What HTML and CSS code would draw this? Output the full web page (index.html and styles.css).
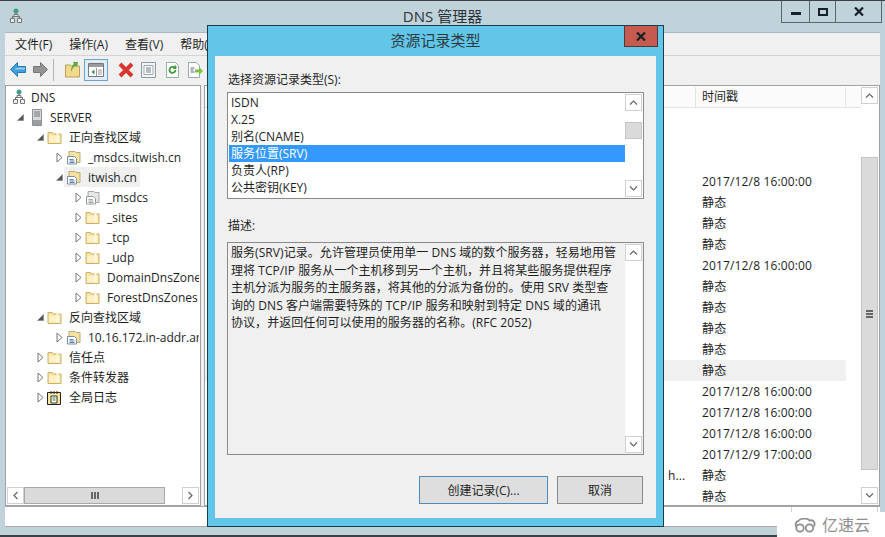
FILE: index.html
```html
<!DOCTYPE html>
<html lang="zh-CN">

<head>
	<meta charset="utf-8">
	<title>DNS 管理器</title>
	<link rel="stylesheet" href="styles.css">
</head>

<body>
	<svg class="defs" width="0" height="0">
		<defs>
			<symbol id="folder" viewBox="0 0 15 15">
				<path d="M1 2.500h4.500l1 1.500h7.500v9.500h-13z" fill="#f8e3a0" stroke="#cdb06a" />
				<path d="M2 5.500h11v7h-11z" fill="#fcf0c4" />
				<path d="M10.500 2v11" stroke="#fff8dc" stroke-width="2" />
			</symbol>
			<symbol id="zone" viewBox="0 0 15 15">
				<path d="M3 1.500h6l1 1h4v10h-11z" fill="#f6e2a0" stroke="#b9a878" />
				<path d="M1.500 6.500h7l2 2v5.500h-9z" fill="#fff" stroke="#7d8ea0" />
				<path d="M3.500 9.500h4M3.500 11h5M3.500 12.500h5" stroke="#5a84ad" />
			</symbol>
			<symbol id="zonegray" viewBox="0 0 15 15">
				<path d="M3 1.500h6l1 1h4v10h-11z" fill="#e6e6e6" stroke="#a8a8a8" />
				<path d="M1.500 6.500h7l2 2v5.500h-9z" fill="#fff" stroke="#9a9a9a" />
				<path d="M3.500 9.500h4M3.500 11h5M3.500 12.500h5" stroke="#9aa4ae" />
			</symbol>
			<symbol id="dnsnode" viewBox="0 0 12 16">
				<circle cx="6" cy="3" r="2.500" fill="#3f9d8c" />
				<path d="M6 5v4M2.500 10V8.500h7V10" stroke="#666" fill="none" />
				<path d="M4 6.500h4v2h-4zM.5 10.500h4v4h-4zM7.500 10.500h4v4h-4z" fill="#eee" stroke="#777" />
			</symbol>
			<symbol id="closed" viewBox="0 0 7 11">
				<path d="M1 1l5 4.500-5 4.500z" fill="#fff" stroke="#777" />
			</symbol>
			<symbol id="open" viewBox="0 0 7 11">
				<path d="M6.500 2.500v6h-6z" fill="#555" stroke="#777" stroke-width=".5" />
			</symbol>
			<symbol id="up" viewBox="0 0 9 5">
				<path d="M1 4.500l3.500-3.500 3.500 3.500" fill="none" stroke="#666" stroke-width="1.200" />
			</symbol>
			<symbol id="down" viewBox="0 0 9 5">
				<path d="M1 .5l3.500 3.500 3.500-3.500" fill="none" stroke="#666" stroke-width="1.200" />
			</symbol>
		</defs>
	</svg>

	<div class="desktop">
		<div class="window">
			<div class="titlebar">
				<svg class="app-icon" width="12" height="16"><use href="#dnsnode" /></svg>
				<div class="window-title">DNS 管理器</div>
				<div class="caption-buttons">
					<div class="cap cap-min"><span></span></div>
					<div class="cap cap-max"><span></span></div>
					<div class="cap cap-close">
						<svg width="10" height="9" viewBox="0 0 10 9"><path d="M1 .5l8 8M9 .5l-8 8" stroke="#16202a" stroke-width="2.200" /></svg>
					</div>
				</div>
			</div>

			<div class="frame">
				<div class="menubar">
					<span>文件(F)</span>
					<span>操作(A)</span>
					<span>查看(V)</span>
					<span>帮助(H)</span>
				</div>

				<div class="toolbar">
					<svg width="16" height="15" viewBox="0 0 16 15"><path d="M.5 7.500l7-7v4h8v6h-8v4z" fill="#3d9fdc" stroke="#2a78b4" /><path d="M8 5.500h7v2h-11z" fill="#8fd0f2" /></svg>
					<svg class="tool-next" width="15" height="15" viewBox="0 0 15 15"><path d="M14.500 7.500l-7-7v4h-7v6h7v4z" fill="#949494" stroke="#777" /></svg>
					<div class="tool-sep"></div>
					<svg width="15" height="17" viewBox="0 0 15 17"><path d="M.5 4h5l1 1h8v11h-14z" fill="#f3d98c" stroke="#b99f5c" /><path d="M6 11c0-4 1-7 3-8l-1-2h5l-1 5-1.500-1.500c-2 1-3 3-4.500 6.500z" fill="#5aa83c" /></svg>
					<div class="tool-active">
						<svg width="16" height="14" viewBox="0 0 16 14"><path d="M.5.5h15v13h-15z" fill="#fff" stroke="#777" /><path d="M1 1h14v3h-14z" fill="#9a9a9a" /><path d="M8.500 5v8" stroke="#999" /><path d="M6.500 6.500l-3 2.500 3 2.500z" fill="#3e8e5a" /><path d="M10 7h4M10 9h4M10 11h4" stroke="#999" /></svg>
					</div>
					<svg class="tool-del" width="16" height="16" viewBox="0 0 16 16"><path d="M2 2l12 12M14 2l-12 12" stroke="#d8362c" stroke-width="4" /></svg>
					<svg class="tool-props" width="15" height="16" viewBox="0 0 15 16"><path d="M.5.500h14v15h-14z" fill="#f4f4f4" stroke="#8a9aa6" /><path d="M3 3.500h9v9h-9z" fill="#fff" stroke="#9aa" /><path d="M5 6h5M5 8h5M5 10h5" stroke="#778" /></svg>
					<svg class="tool-refresh" width="13" height="16" viewBox="0 0 13 16"><path d="M.5.500h9l3 3v12h-12z" fill="#fff" stroke="#9aa" /><path d="M9.500 8a3 3 0 1 1-1-2.300M9.500 3.500v2.500h-2.500" fill="none" stroke="#3f9a3a" stroke-width="1.800" /></svg>
					<svg class="tool-export" width="15" height="16" viewBox="0 0 15 16"><path d="M.5.500h8l3 3v12h-11z" fill="#fff" stroke="#9aa" /><path d="M2.500 6h4M2.500 8h3M2.500 10h4" stroke="#668" /><path d="M7 7.500h4v-2.500l4 4-4 4v-2.500h-4z" fill="#7cc142" /></svg>
				</div>

				<div class="panes">
					<div class="tree-pane">
						<div class="tree">
							<div class="node">
								<svg class="node-icon-dns" width="12" height="16"><use href="#dnsnode" /></svg>
								<span>DNS</span>
							</div>
							<div class="node lvl-1">
								<svg class="exp" width="7" height="11"><use href="#open" /></svg>
								<svg class="server" width="10" height="17" viewBox="0 0 10 17"><path d="M.5.500h9v16h-9z" fill="#d6dadc" stroke="#8f8f8f" /><path d="M2 3h6M2 5h6M2 7h6" stroke="#777" /><path d="M1 11h8v5h-8z" fill="#98a0a4" /></svg>
								<span>SERVER</span>
							</div>
							<div class="node lvl-2">
								<svg class="exp" width="7" height="11"><use href="#open" /></svg>
								<svg class="ico" width="15" height="15"><use href="#folder" /></svg>
								<span>正向查找区域</span>
							</div>
							<div class="node lvl-3">
								<svg class="exp" width="7" height="11"><use href="#closed" /></svg>
								<svg class="ico" width="15" height="15"><use href="#zone" /></svg>
								<span>_msdcs.itwish.cn</span>
							</div>
							<div class="node lvl-3">
								<svg class="exp" width="7" height="11"><use href="#open" /></svg>
								<div class="node-current">
									<svg class="ico" width="15" height="15"><use href="#zone" /></svg>
									<span>itwish.cn</span>
								</div>
							</div>
							<div class="node lvl-4">
								<svg class="exp" width="7" height="11"><use href="#closed" /></svg>
								<svg class="ico" width="15" height="15"><use href="#zonegray" /></svg>
								<span>_msdcs</span>
							</div>
							<div class="node lvl-4">
								<svg class="exp" width="7" height="11"><use href="#closed" /></svg>
								<svg class="ico" width="15" height="15"><use href="#folder" /></svg>
								<span>_sites</span>
							</div>
							<div class="node lvl-4">
								<svg class="exp" width="7" height="11"><use href="#closed" /></svg>
								<svg class="ico" width="15" height="15"><use href="#folder" /></svg>
								<span>_tcp</span>
							</div>
							<div class="node lvl-4">
								<svg class="exp" width="7" height="11"><use href="#closed" /></svg>
								<svg class="ico" width="15" height="15"><use href="#folder" /></svg>
								<span>_udp</span>
							</div>
							<div class="node lvl-4">
								<svg class="exp" width="7" height="11"><use href="#closed" /></svg>
								<svg class="ico" width="15" height="15"><use href="#folder" /></svg>
								<span>DomainDnsZones</span>
							</div>
							<div class="node lvl-4">
								<svg class="exp" width="7" height="11"><use href="#closed" /></svg>
								<svg class="ico" width="15" height="15"><use href="#folder" /></svg>
								<span>ForestDnsZones</span>
							</div>
							<div class="node lvl-2">
								<svg class="exp" width="7" height="11"><use href="#open" /></svg>
								<svg class="ico" width="15" height="15"><use href="#folder" /></svg>
								<span>反向查找区域</span>
							</div>
							<div class="node lvl-3">
								<svg class="exp" width="7" height="11"><use href="#closed" /></svg>
								<svg class="ico" width="15" height="15"><use href="#zone" /></svg>
								<span>10.16.172.in-addr.arpa</span>
							</div>
							<div class="node lvl-2">
								<svg class="exp" width="7" height="11"><use href="#closed" /></svg>
								<svg class="ico" width="15" height="15"><use href="#folder" /></svg>
								<span>信任点</span>
							</div>
							<div class="node lvl-2">
								<svg class="exp" width="7" height="11"><use href="#closed" /></svg>
								<svg class="ico" width="15" height="15"><use href="#folder" /></svg>
								<span>条件转发器</span>
							</div>
							<div class="node lvl-2">
								<svg class="exp" width="7" height="11"><use href="#closed" /></svg>
								<svg class="ico" width="15" height="15" viewBox="0 0 15 15"><path d="M.5 2.500h13v12h-13z" fill="#f6e6a0" stroke="#222" /><path d="M4 1v3M7 1v3M10 1v3" stroke="#333" /><path d="M4 6h6v7h-6z" fill="#fff" stroke="#333" /><path d="M5.500 8h3M5.500 10h3" stroke="#3a7d3a" /></svg>
								<span>全局日志</span>
							</div>
						</div>
						<div class="hscroll">
							<div class="sb-btn">
								<svg width="5" height="9" viewBox="0 0 5 9"><path d="M4.500 1l-3.500 3.500 3.500 3.500" fill="none" stroke="#666" stroke-width="1.200" /></svg>
							</div>
							<div class="hthumb"><i></i><i></i><i></i></div>
							<div class="sb-track"></div>
							<div class="sb-btn">
								<svg width="5" height="9" viewBox="0 0 5 9"><path d="M.5 1l3.500 3.500-3.500 3.500" fill="none" stroke="#666" stroke-width="1.200" /></svg>
							</div>
						</div>
					</div>

					<div class="list-pane">
						<div class="list-main">
							<div class="list-head">
								<div class="head-cell head-blank"></div>
								<div class="head-cell head-time">时间戳</div>
							</div>
							<div class="list-rows">
								<div class="row"><span class="col-a"></span>2017/12/8 16:00:00</div>
								<div class="row"><span class="col-a"></span>静态</div>
								<div class="row"><span class="col-a"></span>静态</div>
								<div class="row"><span class="col-a"></span>静态</div>
								<div class="row"><span class="col-a"></span>2017/12/8 16:00:00</div>
								<div class="row"><span class="col-a"></span>静态</div>
								<div class="row"><span class="col-a"></span>静态</div>
								<div class="row"><span class="col-a"></span>静态</div>
								<div class="row"><span class="col-a"></span>静态</div>
								<div class="row row-selected"><span class="col-a"></span>静态</div>
								<div class="row"><span class="col-a"></span>2017/12/8 16:00:00</div>
								<div class="row"><span class="col-a"></span>2017/12/8 16:00:00</div>
								<div class="row"><span class="col-a"></span>2017/12/8 16:00:00</div>
								<div class="row"><span class="col-a"></span>2017/12/9 17:00:00</div>
								<div class="row"><span class="col-a">h...</span>静态</div>
								<div class="row"><span class="col-a"></span>静态</div>
							</div>
						</div>
						<div class="vscroll vscroll-list">
							<div class="sb-btn"><svg width="9" height="5"><use href="#up" /></svg></div>
							<div class="sb-track list-track-a"></div>
							<div class="vthumb list-thumb"><i></i><i></i><i></i></div>
							<div class="sb-track list-track-b"></div>
							<div class="sb-btn"><svg width="9" height="5"><use href="#down" /></svg></div>
						</div>
					</div>
				</div>

				<div class="statusbar">
					<div class="status-cell"></div>
					<div class="status-end"></div>
				</div>
			</div>
		</div>

		<!-- dialog sits over the window -->
		<div class="dialog">
			<div class="dialog-title">
				资源记录类型
				<div class="dialog-close">
					<svg width="12" height="9" viewBox="0 0 12 9"><path d="M2 .5l8 8M10 .5l-8 8" stroke="#16202a" stroke-width="2.200" /></svg>
				</div>
			</div>
			<div class="dialog-body">
				<div class="field-label">选择资源记录类型(S):</div>
				<div class="type-box">
					<div class="type-list">
						<div class="type-item">ISDN</div>
						<div class="type-item">X.25</div>
						<div class="type-item">别名(CNAME)</div>
						<div class="type-item type-selected">服务位置(SRV)</div>
						<div class="type-item">负责人(RP)</div>
						<div class="type-item">公共密钥(KEY)</div>
					</div>
					<div class="vscroll">
						<div class="sb-btn"><svg width="9" height="5"><use href="#up" /></svg></div>
						<div class="sb-track type-track-a"></div>
						<div class="vthumb type-thumb"></div>
						<div class="sb-track type-track-b"></div>
						<div class="sb-btn"><svg width="9" height="5"><use href="#down" /></svg></div>
					</div>
				</div>

				<div class="field-label desc-label">描述:</div>
				<div class="desc-box">
					<div class="desc-text">
						<div>服务(SRV)记录。允许管理员使用单一 DNS 域的数个服务器，轻易地用管</div>
						<div>理将 TCP/IP 服务从一个主机移到另一个主机，并且将某些服务提供程序</div>
						<div>主机分派为服务的主服务器，将其他的分派为备份的。使用 SRV 类型查</div>
						<div>询的 DNS 客户端需要特殊的 TCP/IP 服务和映射到特定 DNS 域的通讯</div>
						<div>协议，并返回任何可以使用的服务器的名称。(RFC 2052)</div>
					</div>
					<div class="vscroll vscroll-desc">
						<div class="sb-btn"><svg width="9" height="5"><use href="#up" /></svg></div>
						<div class="sb-track desc-track"></div>
						<div class="sb-btn"><svg width="9" height="5"><use href="#down" /></svg></div>
					</div>
				</div>

				<div class="dialog-buttons">
					<button class="btn btn-default">创建记录(C)...</button>
					<button class="btn">取消</button>
				</div>
			</div>
		</div>

		<!-- site watermark in the corner -->
		<div class="watermark">
			<svg width="22" height="15" viewBox="0 0 22 15"><path d="M2.500 9c-1.500-2-1-5.500 2-6 1-2.500 9-3.500 11-.5 3-1 6.500 1.500 4.500 6" fill="none" stroke="#8f8f8f" stroke-width="1.800" /><circle cx="6" cy="10" r="3.700" fill="none" stroke="#8f8f8f" stroke-width="1.800" /><circle cx="15.500" cy="10" r="3.700" fill="none" stroke="#8f8f8f" stroke-width="1.800" /></svg>
			<span>亿速云</span>
		</div>
	</div>
</body>

</html>
```

FILE: styles.css
```css
* {
	box-sizing: border-box;
}

html,
body {
	margin: 0;
	padding: 0;
}

body {
	width: 885px;
	height: 537px;
	overflow: hidden;
	font-family: "Open Sans", "Noto Sans CJK SC", sans-serif;
	font-size: 12px;
	color: #1e1e1e;
	background: #3a4248;
}

.defs {
	display: block;
	height: 0;
}

.desktop {
	position: relative;
	width: 885px;
	height: 537px;
	overflow: hidden;
}

.window {
	height: 534px;
	margin-top: 1px;
	padding: 0 0 8px 5px;
	display: flex;
	flex-direction: column;
	background: #c0d2da;
}

/* title bar */
.titlebar {
	height: 31px;
	margin-left: -5px;
	padding: 7px 4px 0 10px;
	display: flex;
	position: relative;
	flex: none;
}

.window-title {
	position: absolute;
	left: 0;
	right: 0;
	top: 5px;
	text-align: center;
	font-size: 15px;
	line-height: 20px;
	color: #2c3338;
}

.caption-buttons {
	position: absolute;
	top: 0;
	right: 3px;
	height: 22px;
	display: flex;
	border: 1px solid #59666e;
	border-top: 0;
}

.cap {
	height: 21px;
	display: flex;
	align-items: center;
	justify-content: center;
	border-left: 1px solid #59666e;
}

.cap:first-child {
	border-left: 0;
}

.cap-min {
	width: 27px;
}

.cap-min span {
	width: 10px;
	height: 3px;
	margin-top: 3px;
	background: #16202a;
}

.cap-max {
	width: 26px;
}

.cap-max span {
	width: 10px;
	height: 8px;
	border: 2px solid #16202a;
}

.cap-close {
	width: 46px;
}

.frame {
	flex: 1;
	min-height: 0;
	margin-right: 5px;
	display: flex;
	flex-direction: column;
	background: #f0f0f0;
	border-top: 1px solid #aab8be;
}

.menubar {
	height: 23px;
	flex: none;
	padding: 0 0 1px 10px;
	display: flex;
	gap: 17px;
	align-items: center;
	border-bottom: 1px solid #d4d4d4;
	background: #f0f0f0;
	overflow: hidden;
	white-space: nowrap;
}

/* toolbar */
.toolbar {
	height: 29px;
	flex: none;
	padding: 0 0 2px 5px;
	display: flex;
	align-items: center;
	background: #f0f0f0;
}

.tool-next {
	margin-left: 7px;
}

.tool-sep {
	width: 1px;
	height: 22px;
	margin: 0 11px 0 5px;
	background: #b5b5b5;
}

.tool-active {
	width: 24px;
	height: 22px;
	margin-left: 4px;
	display: flex;
	align-items: center;
	justify-content: center;
	background: #e0ecf6;
	border: 1px solid #6aa5cf;
}

.tool-del {
	margin-left: 10px;
}

.tool-props {
	margin-left: 7px;
}

.tool-refresh {
	margin-left: 10px;
}

.tool-export {
	margin-left: 9px;
}

/* panes */
.panes {
	height: 421px;
	flex: none;
	display: flex;
	gap: 3px;
}

.tree-pane {
	width: 196px;
	flex: none;
	display: flex;
	flex-direction: column;
	padding: 1px;
	background: #fff;
	border: 1px solid #a0a0a0;
}

.tree {
	flex: 1;
	min-height: 0;
	overflow: hidden;
}

.node {
	height: 20px;
	padding-left: 6px;
	display: flex;
	align-items: center;
	white-space: nowrap;
}

.node-icon-dns {
	margin-right: 6px;
}

.exp {
	margin-right: 3px;
	flex: none;
}

.ico {
	margin-right: 7px;
	flex: none;
}

.server {
	margin-right: 8px;
	margin-left: 5px;
	flex: none;
}

.lvl-1 {
	padding-left: 10px;
}

.lvl-2 {
	padding-left: 30px;
}

.lvl-2 .ico {
	margin-right: 7px;
}

.lvl-3 {
	padding-left: 49px;
}

.lvl-4 {
	padding-left: 68px;
}

.node-current {
	height: 20px;
	margin-left: -2px;
	padding: 0 3px 0 2px;
	display: flex;
	align-items: center;
	background: #f0f0f0;
}

.hscroll {
	height: 17px;
	flex: none;
	display: flex;
	background: #fff;
}

.sb-btn {
	flex: none;
	display: flex;
	align-items: center;
	justify-content: center;
	background: #fff;
	border: 1px solid #d0d0d0;
}

.hscroll .sb-btn {
	width: 17px;
}

.hthumb {
	width: 141px;
	display: flex;
	gap: 1px;
	align-items: center;
	justify-content: center;
	background: #dadada;
	border: 1px solid #a8a8a8;
}

.hthumb i {
	width: 2px;
	height: 7px;
	background: #666;
}

.sb-track {
	flex: 1;
	background: #fff;
}

/* right list, mostly behind the dialog */
.list-pane {
	flex: 1;
	display: flex;
	padding: 1px 1px 1px 0;
	background: #fff;
	border: 1px solid #a0a0a0;
}

.list-main {
	flex: 1;
	min-width: 0;
	overflow: hidden;
}

.list-head {
	height: 21px;
	display: flex;
	border-bottom: 1px solid #e4e4e4;
	background: #fbfbfb;
}

.head-blank {
	width: 491px;
	border-right: 1px solid #e4e4e4;
}

.head-time {
	width: 150px;
	padding-left: 6px;
	line-height: 20px;
	border-right: 1px solid #e4e4e4;
}

.list-rows {
	padding-top: 63px;
}

.row {
	height: 21px;
	line-height: 21px;
	display: flex;
	letter-spacing: .15px;
	white-space: nowrap;
}

.col-a {
	width: 497px;
	padding-left: 463px;
	flex: none;
}

.row-selected {
	width: 641px;
	background: #f0f0f0;
}

.vscroll {
	width: 17px;
	flex: none;
	display: flex;
	flex-direction: column;
	background: #fff;
}

.vscroll .sb-btn {
	height: 17px;
}

.vthumb {
	flex: none;
	display: flex;
	flex-direction: column;
	gap: 1px;
	align-items: center;
	justify-content: center;
	background: #dadada;
	border: 1px solid #c4c4c4;
}

.vthumb i {
	width: 7px;
	height: 2px;
	background: #666;
}

.list-track-a {
	flex: none;
	height: 53px;
}

.list-thumb {
	height: 313px;
}

/* statusbar */
.statusbar {
	flex: 1;
	display: flex;
	background: #fff;
	border-top: 1px solid #a8a8a8;
	border-bottom: 1px solid #a8a8a8;
}

.status-cell {
	width: 787px;
	border-right: 1px solid #d0d0d0;
}

.status-end {
	width: 86px;
	border-right: 1px solid #d0d0d0;
}

/* dialog */
.dialog {
	position: absolute;
	left: 207px;
	top: 25px;
	width: 457px;
	height: 502px;
	padding: 0 7px 8px;
	display: flex;
	flex-direction: column;
	background: #62c6e8;
	border: 1px solid #17404f;
}

.dialog-title {
	height: 30px;
	flex: none;
	position: relative;
	text-align: center;
	font-size: 15px;
	line-height: 29px;
	color: #2c3a40;
}

.dialog-close {
	position: absolute;
	top: 0;
	right: -2px;
	width: 34px;
	height: 21px;
	display: flex;
	align-items: center;
	justify-content: center;
	background: #c75a4e;
	border: 1px solid #4a3a38;
	border-top: 0;
}

.dialog-body {
	flex: 1;
	padding: 15px 12px 0 13px;
	display: flex;
	flex-direction: column;
	background: #f0f0f0;
}

.field-label {
	height: 18px;
	line-height: 18px;
}

.type-box {
	height: 107px;
	margin: 3px 0 0 -1px;
	display: flex;
	padding: 1px 1px 1px 1px;
	background: #fff;
	border: 1px solid #8a8a8a;
}

.type-list {
	flex: 1;
	min-width: 0;
	overflow: hidden;
}

.type-item {
	height: 17px;
	line-height: 17px;
	padding-left: 2px;
}

.type-selected {
	color: #fff;
	background: #3399ff;
}

.type-track-a {
	flex: none;
	height: 11px;
}

.type-thumb {
	height: 17px;
}

.desc-label {
	margin-top: 18px;
}

.desc-box {
	height: 213px;
	margin: 7px 0 0 -1px;
	display: flex;
	padding: 1px 1px 1px 2px;
	background: #f0f0f0;
	border: 1px solid #8a8a8a;
}

.desc-text {
	flex: 1;
	min-width: 0;
	padding-left: 1px;
	letter-spacing: .06px;
	white-space: nowrap;
	overflow: hidden;
}

.desc-text div {
	height: 17.500px;
	line-height: 17.500px;
}

.dialog-buttons {
	margin-top: 21px;
	padding-right: 1px;
	display: flex;
	justify-content: flex-end;
	gap: 9px;
}

.btn {
	width: 86px;
	height: 28px;
	padding: 0;
	font: inherit;
	color: #222;
	background: #dedede;
	border: 1px solid #8a8a8a;
}

.btn-default {
	width: 129px;
	border-color: #4f8db4;
}

/* watermark */
.watermark {
	position: absolute;
	left: 777px;
	top: 512px;
	width: 108px;
	height: 26px;
	padding: 0 0 0 17px;
	display: flex;
	gap: 6px;
	align-items: center;
	font-size: 16px;
	line-height: 26px;
	color: #8f8f8f;
	background: #fff;
}
```
